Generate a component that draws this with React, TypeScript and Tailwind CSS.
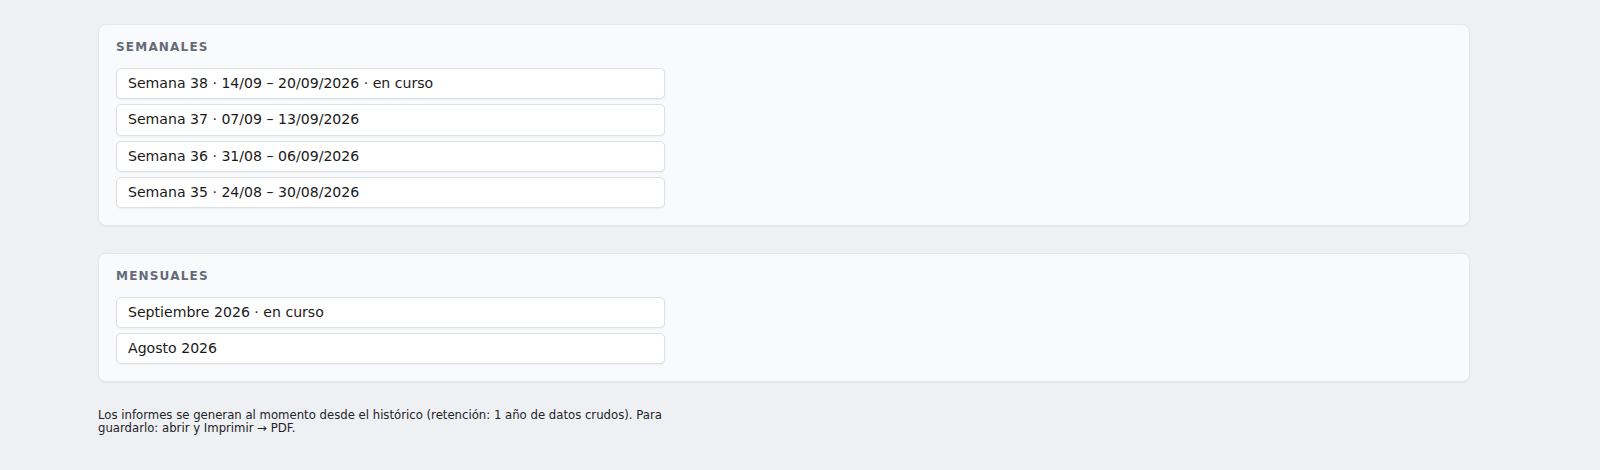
import React from "react";

const semanales = [
  "Semana 38 · 14/09 – 20/09/2026 · en curso",
  "Semana 37 · 07/09 – 13/09/2026",
  "Semana 36 · 31/08 – 06/09/2026",
  "Semana 35 · 24/08 – 30/08/2026",
];
const mensuales = ["Septiembre 2026 · en curso", "Agosto 2026"];

function Card({ title, items }: { title: string; items: string[] }) {
  return (
    <section className="rounded-[8px] border border-[#e3e6ec] bg-[#f9fafc] px-[17px] pt-[13px] pb-[16.5px] shadow-[0_1px_2px_rgba(0,0,0,0.04)]">
      <h2 className="text-[12px] font-bold tracking-[0.1em] text-[#646a78] leading-[18px]">{title}</h2>
      <div className="mt-[12px] flex w-[549px] flex-col gap-[5px]">
        {items.map((t) => (
          <div
            key={t}
            className="h-[31.3px] flex items-center rounded-[5px] border border-[#dcdfe5] bg-white px-[11px] text-[14.1px] text-[#1a1a1a] shadow-[0_1px_2px_rgba(0,0,0,0.05)]"
          >
            {t}
          </div>
        ))}
      </div>
    </section>
  );
}

export default function App() {
  return (
    <div
      className="min-h-[470px] bg-[#eef0f4] pt-[24px]"
      style={{ fontFamily: '"DejaVu Sans", sans-serif' }}
    >
      <div className="ml-[98px] w-[1372px] flex flex-col">
        <Card title="SEMANALES" items={semanales} />
        <div className="h-[27px]" />
        <Card title="MENSUALES" items={mensuales} />
        <p className="mt-[27px] w-[580px] text-[11.7px] leading-[13.5px] text-[#1f2328]">
          Los informes se generan al momento desde el histórico (retención: 1 año de datos crudos). Para guardarlo: abrir y Imprimir → PDF.
        </p>
      </div>
    </div>
  );
}
